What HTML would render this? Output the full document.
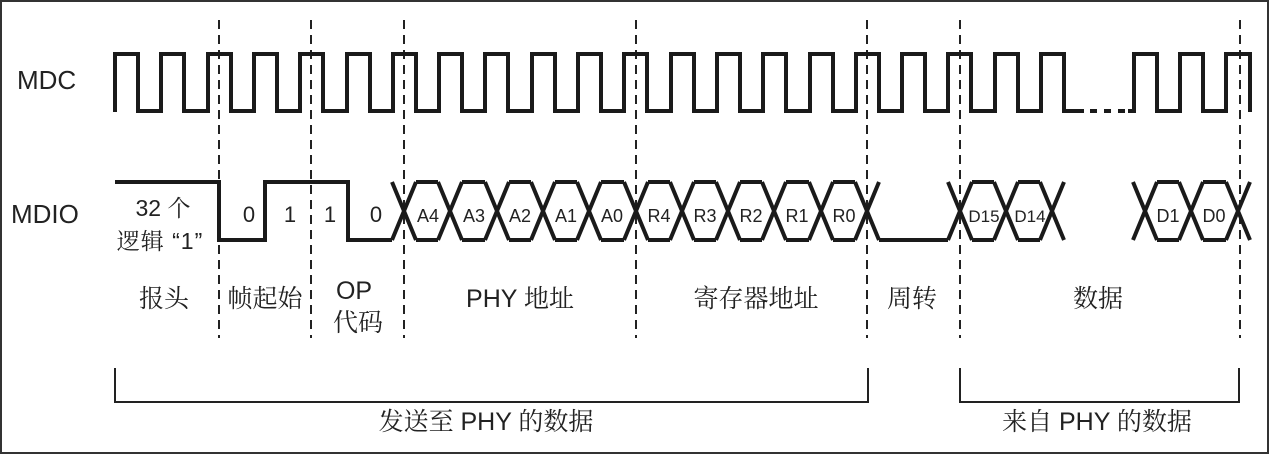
<!DOCTYPE html>
<html><head><meta charset="utf-8"><style>
html,body{margin:0;padding:0;background:#fff;}
svg{display:block;}
.t{font-family:"Liberation Sans","Noto Serif CJK SC",sans-serif;fill:#222;}
.c{font-family:"Liberation Sans","Noto Serif CJK SC",serif;fill:#222;}
</style></head><body>
<svg width="1270" height="455" viewBox="0 0 1270 455" xmlns="http://www.w3.org/2000/svg">
<rect x="1" y="1" width="1267" height="452" fill="#fff" stroke="#333" stroke-width="2"/>
<g stroke="#222" stroke-width="2" stroke-dasharray="9,6">
<line x1="219" y1="20" x2="219" y2="338"/>
<line x1="311" y1="20" x2="311" y2="338"/>
<line x1="404" y1="20" x2="404" y2="338"/>
<line x1="636" y1="20" x2="636" y2="338"/>
<line x1="867" y1="20" x2="867" y2="338"/>
<line x1="960" y1="20" x2="960" y2="338"/>
<line x1="1240" y1="20" x2="1240" y2="338"/>
</g>
<g fill="none" stroke="#1a1a1a" stroke-width="4" stroke-linejoin="miter">
<path d="M115,112 V54 H138 V111 H161 V54 H184 V111 H208 V54 H231 V111 H254 V54 H277 V111 H300 V54 H323 V111 H347 V54 H370 V111 H393 V54 H416 V111 H439 V54 H462 V111 H485 V54 H508 V111 H532 V54 H555 V111 H578 V54 H601 V111 H624 V54 H647 V111 H671 V54 H694 V111 H717 V54 H740 V111 H763 V54 H786 V111 H810 V54 H833 V111 H856 V54 H879 V111 H902 V54 H925 V111 H948 V54 H971 V111 H995 V54 H1018 V111 H1041 V54 H1064 V111 H1084"/>
<path d="M1090,111 H1097 M1104,111 H1111 M1118,111 H1125"/>
<path d="M1128,111 H1134 V54 H1157 V111 H1180 V54 H1203 V111 H1226 V54 H1250 V112"/>
<path d="M115,182 H219 V240 H265 V182 H348 V240 H392"/>
<path d="M392,240 L416,182 M392,182 L416,240
M438,182 L462,240 M438,240 L462,182
M485,182 L509,240 M485,240 L509,182
M531,182 L555,240 M531,240 L555,182
M577,182 L601,240 M577,240 L601,182
M624,182 L648,240 M624,240 L648,182
M670,182 L694,240 M670,240 L694,182
M716,182 L740,240 M716,240 L740,182
M762,182 L786,240 M762,240 L786,182
M809,182 L833,240 M809,240 L833,182
M855,182 L879,240 M855,240 L879,182
M948,182 L972,240 M948,240 L972,182
M994,182 L1018,240 M994,240 L1018,182
M1040,182 L1064,240 M1040,240 L1064,182
M1133,182 L1157,240 M1133,240 L1157,182
M1179,182 L1203,240 M1179,240 L1203,182
M1226,182 L1250,240 M1226,240 L1250,182"/>
<path d="M416,182 H438 M462,182 H485 M509,182 H531 M555,182 H577 M601,182 H624 M648,182 H670 M694,182 H716 M740,182 H762 M786,182 H809 M833,182 H855
M416,240 H438 M462,240 H485 M509,240 H531 M555,240 H577 M601,240 H624 M648,240 H670 M694,240 H716 M740,240 H762 M786,240 H809 M833,240 H855
M879,240 H948
M972,182 H994 M1018,182 H1040 M972,240 H994 M1018,240 H1040
M1157,182 H1179 M1203,182 H1226 M1157,240 H1179 M1203,240 H1226"/>
</g>
<g fill="none" stroke="#222" stroke-width="2">
<path d="M115,368 V402 H868 V368"/>
<path d="M960,368 V402 H1239 V368"/>
</g>
<text class="t" x="17" y="89" font-size="26">MDC</text>
<text class="t" x="11" y="223" font-size="26">MDIO</text>
<text class="c" x="163" y="216" font-size="23" text-anchor="middle">32 个</text>
<text class="c" x="160" y="249" font-size="23" text-anchor="middle" letter-spacing="1">逻辑 “1”</text>
<g class="t" font-size="22" text-anchor="middle">
<text x="249" y="222">0</text><text x="290" y="222">1</text><text x="330" y="222">1</text><text x="376" y="222">0</text>
</g>
<g class="t" font-size="18" text-anchor="middle">
<text x="428" y="222">A4</text><text x="474" y="222">A3</text><text x="520" y="222">A2</text><text x="566" y="222">A1</text><text x="612" y="222">A0</text>
<text x="659" y="222">R4</text><text x="705" y="222">R3</text><text x="751" y="222">R2</text><text x="797" y="222">R1</text><text x="844" y="222">R0</text>
<text x="984" y="222" font-size="17">D15</text><text x="1030" y="222" font-size="17">D14</text>
<text x="1168" y="222">D1</text><text x="1214" y="222">D0</text>
</g>
<g class="c" font-size="25" text-anchor="middle">
<text x="164" y="307">报头</text>
<text x="265" y="307">帧起始</text>
<text x="354" y="299" class="t">OP</text>
<text x="358" y="331">代码</text>
<text x="520" y="307">PHY 地址</text>
<text x="756" y="307">寄存器地址</text>
<text x="912" y="307">周转</text>
<text x="1098" y="307">数据</text>
<text x="486" y="430">发送至 PHY 的数据</text>
<text x="1097" y="430">来自 PHY 的数据</text>
</g>
</svg>
</body></html>
